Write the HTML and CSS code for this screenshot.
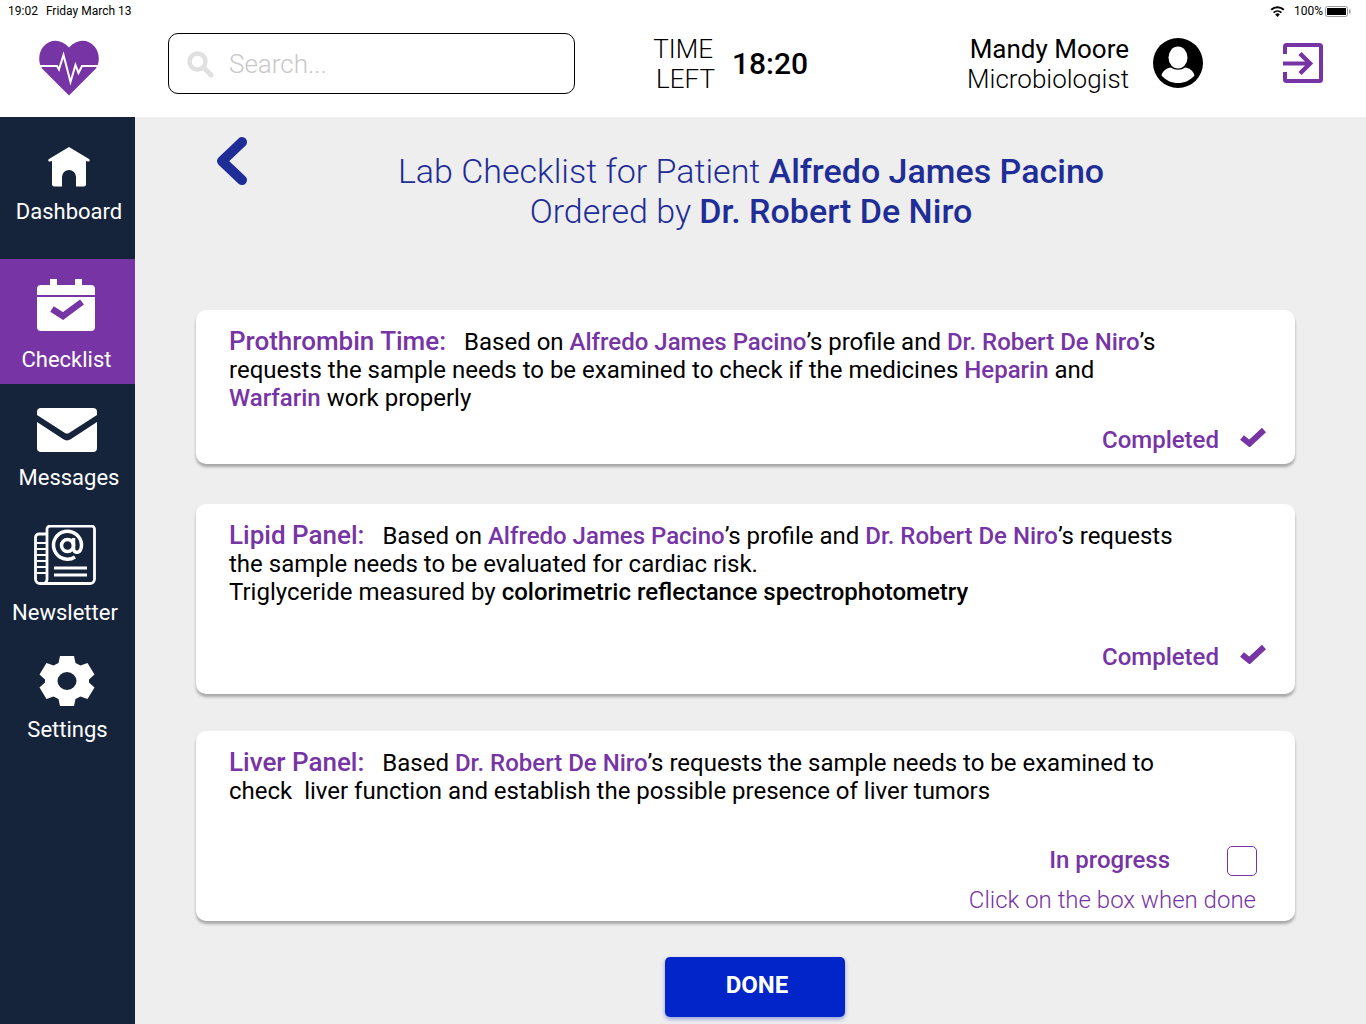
FILE: index.html
```html
<!DOCTYPE html>
<html lang="en">
<head>
    <meta charset="UTF-8">
    <meta name="viewport" content="width=device-width, initial-scale=1.0">
    <title>Lab Checklist</title>
    <link rel="stylesheet" href="styles.css">
</head>
<body>

<div class="statusBar">
    <span class="statusTime">19:02</span>
    <span class="statusDate">Friday March 13</span>
    <svg class="wifi" width="15" height="11" viewBox="0 0 15 11">
        <path d="M7.5 11 5.2 8.4a3.4 3.4 0 0 1 4.6 0z" fill="#000"/>
        <path d="M3.6 6.6a5.8 5.8 0 0 1 7.8 0M1.2 3.8a9.2 9.2 0 0 1 12.6 0" fill="none" stroke="#000" stroke-width="1.9"/>
    </svg>
    <span class="statusBattery">100%</span>
    <svg class="battery" width="26" height="11" viewBox="0 0 26 11">
        <rect x="0.5" y="0.5" width="22" height="10" rx="2" fill="#fff" stroke="#999"/>
        <rect x="2" y="2" width="19" height="7" fill="#000"/>
        <rect x="24" y="3.5" width="1.5" height="4" fill="#999"/>
    </svg>
</div>

<header class="topBar">
    <svg class="logo" width="60" height="56" viewBox="0 0 60 56">
        <path d="M30 55.500 3.500 29C-1.500 23-.500 12 4.500 6.500 11-1 22-1.500 30 7.500 38-1.500 49-1 55.500 6.500 60.500 12 61.500 23 56.500 29z" fill="#7634a5"/>
        <path d="M0 26h18l2 3.500 4.500-14.500 7 27 5-17 3 8 3.500-7h17" fill="none" stroke="#fff" stroke-width="2"/>
    </svg>
    <div class="searchBox">
        <svg width="28" height="28" viewBox="0 0 28 28">
            <circle cx="11.500" cy="11.500" r="8" fill="none" stroke="#e0e0e0" stroke-width="4.500"/>
            <path d="M17.500 17.500 25 25" stroke="#e0e0e0" stroke-width="5" stroke-linecap="round"/>
        </svg>
        <span class="searchText">Search...</span>
    </div>
    <div class="timeLeft">
        <span class="timeWord">TIME</span>
        <span>LEFT</span>
    </div>
    <div class="timeValue">18:20</div>
    <div class="userInfo">
        <div class="userName">Mandy Moore</div>
        <div class="userRole">Microbiologist</div>
    </div>
    <svg class="avatar" width="50" height="50" viewBox="0 0 50 50">
        <circle cx="25" cy="25" r="25" fill="#000"/>
        <ellipse cx="25" cy="19.500" rx="9.500" ry="11" fill="#fff"/>
        <path d="M8.500 37.500C10 32 14 30 18 29.500 22 32.500 28 32.500 32 29.500 36 30 40 32 41.500 37.500 37 42.500 31.500 45 25 45S13 42.500 8.500 37.500z" fill="#fff"/>
    </svg>
    <svg class="logout" width="40" height="40" viewBox="0 0 40 40">
        <path d="M2 11V3.500A1.500 1.500 0 0 1 3.500 2h33A1.500 1.500 0 0 1 38 3.500v33a1.500 1.500 0 0 1-1.500 1.500h-33A1.500 1.500 0 0 1 2 36.500V29" fill="none" stroke="#7634a5" stroke-width="4"/>
        <path d="M0 20.500h25" stroke="#7634a5" stroke-width="4"/>
        <path d="M17 10.500l10 10-10 10" fill="none" stroke="#7634a5" stroke-width="4.500"/>
    </svg>
</header>

<div class="layout">
    <nav class="sideNav">
        <div class="navItem navDashboard">
            <svg width="42" height="40" viewBox="0 0 42 40">
                <path d="M21 0 41 12c1.500 1 .5 3-1 2.500L38 14v23a2.500 2.500 0 0 1-2.500 2.500H28V30a7 7 0 0 0-14 0v9.500H6.500A2.500 2.500 0 0 1 4 37V14l-2 .5c-1.500.5-2.500-1.500-1-2.500z" fill="#fff"/>
            </svg>
            <span>Dashboard</span>
        </div>
        <div class="navItem navChecklist active">
            <svg width="58" height="52" viewBox="0 0 58 52">
                <path d="M13 0h7v6h18V0h7v6h9a4 4 0 0 1 4 4v6H0v-6a4 4 0 0 1 4-4h9z" fill="#fff"/>
                <path d="M0 18h58v30a4 4 0 0 1-4 4H4a4 4 0 0 1-4-4z" fill="#fff"/>
                <path d="M15 30l11 7 19-14" fill="none" stroke="#7634a5" stroke-width="6.500"/>
            </svg>
            <span>Checklist</span>
        </div>
        <div class="navItem navMessages">
            <svg width="60" height="44" viewBox="0 0 60 44">
                <path d="M0 4a4 4 0 0 1 4-4h52a4 4 0 0 1 4 4v3L32 25a4 4 0 0 1-4 0L0 7z" fill="#fff"/>
                <path d="M0 14l26 17a7 7 0 0 0 8 0l26-17v26a4 4 0 0 1-4 4H4a4 4 0 0 1-4-4z" fill="#fff"/>
            </svg>
            <span>Messages</span>
        </div>
        <div class="navItem navNewsletter">
            <svg width="62" height="60" viewBox="0 0 62 60">
                <path d="M13 9H5a3.500 3.500 0 0 0-3.500 3.500V54a4.500 4.500 0 0 0 4.500 4.500h50a4.500 4.500 0 0 0 4.500-4.500V4A3 3 0 0 0 57.500 1H16a3 3 0 0 0-3 3v50a4.500 4.500 0 0 1-7 4" fill="none" stroke="#fff" stroke-width="2.800"/>
                <path d="M3 18h9M3 24h9M3 30h9M3 36h9M3 42h9M3 48h9" stroke="#fff" stroke-width="2.200"/>
                <path d="M20 43h33M20 50h33" stroke="#fff" stroke-width="3"/>
                <circle cx="33.500" cy="20.500" r="6" fill="none" stroke="#fff" stroke-width="3.500"/>
                <path d="M39.500 13v10.500c0 5.500 8 5.500 8-3.500a14 14 0 1 0-6.500 12" fill="none" stroke="#fff" stroke-width="3.500"/>
            </svg>
            <span>Newsletter</span>
        </div>
        <div class="navItem navSettings">
            <svg width="56" height="50" viewBox="0 0 56 50">
                <path fill-rule="evenodd" fill="#fff" d="M21 0h14l1.500 7 5 2.500 7-2.500 7 11.500-5.500 5v3l5.500 5-7 11.500-7-2.500-5 2.500L35 50H21l-1.500-7-5-2.500-7 2.500L.5 31.500l5.500-5v-3l-5.500-5 7-11.500 7 2.500 5-2.500zM28 16a9.500 9 0 1 0 0 18 9.500 9 0 1 0 0-18z"/>
            </svg>
            <span>Settings</span>
        </div>
    </nav>

    <main class="content">
        <div class="pageHead">
            <svg class="backArrow" width="32" height="48" viewBox="0 0 32 48">
                <path d="M26 5 6 24l20 19" fill="none" stroke="#1f2d96" stroke-width="10" stroke-linecap="round" stroke-linejoin="round"/>
            </svg>
            <h1>Lab Checklist for Patient <b>Alfredo James Pacino</b><br>Ordered by <b>Dr. Robert De Niro</b></h1>
        </div>

        <section class="card cardFirst">
            <p><span class="cardTitle">Prothrombin Time:</span>Based on <span class="hl">Alfredo James Pacino</span>’s profile and <span class="hl">Dr. Robert De Niro</span>’s<br>requests the sample needs to be examined to check if the medicines <span class="hl">Heparin</span> and<br><span class="hl">Warfarin</span> work properly</p>
            <div class="cardStatus">
                <span>Completed</span>
                <svg width="26" height="20" viewBox="0 0 26 20"><path d="M2 10.500l7.500 6L24 3" fill="none" stroke="#7634a5" stroke-width="6"/></svg>
            </div>
        </section>

        <section class="card cardSecond">
            <p><span class="cardTitle">Lipid Panel:</span>Based on <span class="hl">Alfredo James Pacino</span>’s profile and <span class="hl">Dr. Robert De Niro</span>’s requests<br>the sample needs to be evaluated for cardiac risk.<br>Triglyceride measured by <b>colorimetric reflectance spectrophotometry</b></p>
            <div class="cardStatus">
                <span>Completed</span>
                <svg width="26" height="20" viewBox="0 0 26 20"><path d="M2 10.500l7.500 6L24 3" fill="none" stroke="#7634a5" stroke-width="6"/></svg>
            </div>
        </section>

        <section class="card cardThird">
            <p><span class="cardTitle">Liver Panel:</span>Based <span class="hl">Dr. Robert De Niro</span>’s requests the sample needs to be examined to<br>check&nbsp; liver function and establish the possible presence of liver tumors</p>
            <div class="progressRow">
                <span>In progress</span>
                <div class="checkBox"></div>
            </div>
            <div class="progressHint">Click on the box when done</div>
        </section>

        <button class="doneButton">DONE</button>
    </main>
</div>

</body>
</html>
```

FILE: styles.css
```css
body {
    font-family: Roboto, "Liberation Sans", sans-serif;
    background-color: #eeeeee;
    color: #000;
    margin: 0;
    width: 1366px;
    height: 1024px;
    overflow: hidden;
}

.statusBar {
    height: 22px;
    background-color: #fff;
    display: flex;
    align-items: center;
    font-size: 12px;
    padding: 0 15px 0 8px;
}

.statusTime {
    margin-right: 8px;
}

.statusDate {
    margin-right: auto;
}

.statusBattery {
    margin: 0 2px 0 9px;
}

.topBar {
    height: 95px;
    box-sizing: border-box;
    padding-bottom: 12px;
    background-color: #fff;
    display: flex;
    align-items: center;
}

.logo {
    margin-left: 39px;
    margin-top: 8px;
}

.searchBox {
    width: 407px;
    height: 61px;
    box-sizing: border-box;
    margin-left: 69px;
    border: 1px solid #000;
    border-radius: 10px;
    display: flex;
    align-items: center;
    padding-left: 17px;
}

.searchText {
    font-size: 26px;
    font-weight: 300;
    color: #c8c8c8;
    margin-left: 15px;
}

.timeLeft {
    width: 62px;
    margin-left: 78px;
    font-size: 26px;
    font-weight: 300;
    line-height: 30px;
    display: flex;
    flex-direction: column;
    align-items: flex-end;
}

.timeWord {
    margin-right: 2px;
}

.timeValue {
    font-size: 30px;
    font-weight: 500;
    margin-left: 17px;
    width: 227px;
}

.userInfo {
    width: 170px;
    text-align: right;
    font-size: 26px;
    line-height: 30px;
    white-space: nowrap;
}

.userRole {
    font-weight: 300;
}

.avatar {
    margin-left: 24px;
    margin-top: -2px;
}

.logout {
    margin-left: 80px;
    margin-top: -2px;
}

.layout {
    display: flex;
    height: 907px;
}

.sideNav {
    width: 135px;
    flex-shrink: 0;
    background-color: #16243b;
    color: #fff;
    font-size: 22px;
}

.navItem {
    display: flex;
    flex-direction: column;
    align-items: center;
    box-sizing: border-box;
}

.navItem span {
    display: block;
    line-height: 26px;
}

.navDashboard {
    height: 142px;
    padding-top: 30px;
    padding-left: 3px;
}

.navDashboard span {
    margin-top: 12px;
}

.navChecklist {
    height: 125px;
    padding-top: 20px;
    padding-right: 4px;
}

.navChecklist span {
    margin-top: 16px;
    margin-left: 2px;
}

.navItem.active {
    background-color: #7634a5;
}

.navMessages {
    height: 125px;
    padding-top: 24px;
    padding-right: 1px;
}

.navMessages span {
    margin-top: 13px;
    margin-left: 4px;
}

.navNewsletter {
    height: 125px;
    padding-top: 16px;
    padding-right: 5px;
}

.navNewsletter span {
    margin-top: 15px;
}

.navSettings {
    padding-top: 22px;
    padding-right: 1px;
}

.navSettings span {
    margin-top: 11px;
    margin-left: 1px;
}

.content {
    flex: 1;
    padding: 0 71px 0 61px;
}

.pageHead {
    height: 193px;
    display: flex;
    align-items: flex-start;
}

.backArrow {
    margin: 20px 0 0 20px;
}

h1 {
    flex: 1;
    margin: 34px 0 0 0;
    padding-right: 41px;
    text-align: center;
    font-size: 34px;
    font-weight: 300;
    line-height: 40px;
    color: #1f2d96;
}

h1 b {
    font-weight: 500;
}

.card {
    background-color: #fff;
    border-radius: 10px;
    box-shadow: 0 3px 3px rgba(0, 0, 0, 0.3);
    box-sizing: border-box;
    padding: 17px 29px 0 33px;
}

.card p {
    margin: 0;
    font-size: 24px;
    line-height: 28px;
}

.card p b {
    font-weight: 500;
}

.cardFirst {
    height: 154px;
    margin-bottom: 40px;
}

.cardSecond {
    height: 190px;
    margin-bottom: 37px;
}

.cardThird {
    height: 190px;
    margin-bottom: 36px;
}

.cardTitle {
    font-size: 26px;
    font-weight: 500;
    color: #7634a5;
    margin-right: 18px;
}

.hl {
    color: #7634a5;
    font-weight: 500;
}

.cardStatus {
    display: flex;
    justify-content: flex-end;
    align-items: center;
    color: #7634a5;
    font-size: 24px;
    font-weight: 500;
    gap: 21px;
    margin-top: 14px;
}

.cardStatus svg {
    margin-top: -6px;
}

.cardSecond .cardStatus {
    margin-top: 37px;
}

.progressRow {
    display: flex;
    justify-content: flex-end;
    align-items: center;
    color: #7634a5;
    font-size: 24px;
    font-weight: 500;
    gap: 57px;
    margin-top: 41px;
    padding-right: 9px;
}

.progressRow span {
    margin-bottom: 2px;
}

.checkBox {
    width: 28px;
    height: 28px;
    border: 1px solid #7634a5;
    border-radius: 5px;
}

.progressHint {
    text-align: right;
    color: #7634a5;
    font-size: 24px;
    font-weight: 300;
    padding-right: 10px;
    margin-top: 10px;
}

.doneButton {
    display: block;
    width: 180px;
    height: 60px;
    margin-left: 469px;
    padding: 0 0 4px 4px;
    background-color: #0225c9;
    color: #fff;
    border: 0;
    border-radius: 5px;
    font-family: Roboto, "Liberation Sans", sans-serif;
    font-size: 24px;
    font-weight: 700;
    box-shadow: 0 2px 4px rgba(2, 37, 201, 0.4);
    cursor: pointer;
}
```
